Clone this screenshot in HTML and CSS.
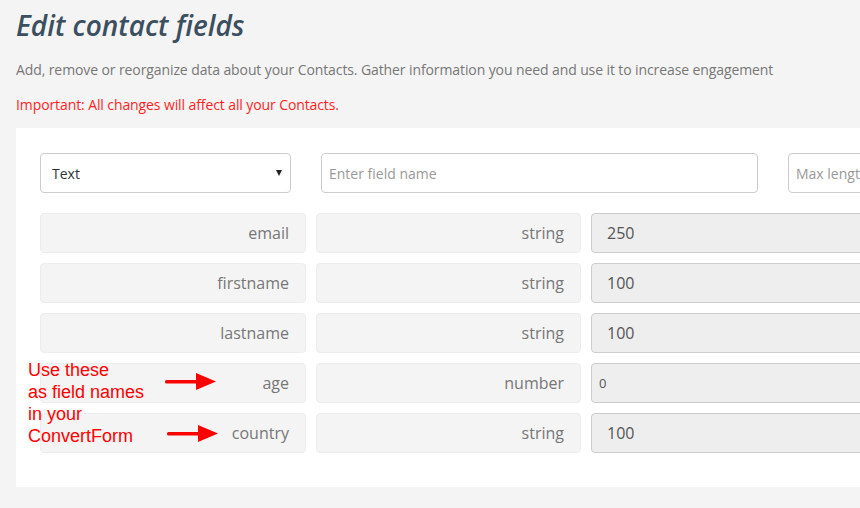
FILE: index.html
```html
<!DOCTYPE html>
<html lang="en">
<head>
    <meta charset="UTF-8">
    <meta name="viewport" content="width=device-width, initial-scale=1.0">
    <title>Edit contact fields</title>
    <link rel="stylesheet" href="styles.css">
</head>
<body>
    <h1 class="page-title">Edit contact fields</h1>
    <p class="page-intro">Add, remove or reorganize data about your Contacts. Gather information you need and use it to increase engagement</p>
    <p class="page-warning">Important: All changes will affect all your Contacts.</p>

    <div class="fields-panel">
        <!-- New field -->
        <div class="new-field">
            <div class="select-wrap">
                <select class="field-type">
                    <option>Text</option>
                    <option>Number</option>
                </select>
            </div>
            <input type="text" class="field-name" placeholder="Enter field name">
            <input type="text" class="field-max" placeholder="Max length">
        </div>

        <!-- Existing fields -->
        <div class="field-list">
            <div class="field-row">
                <div class="cell-readonly">email</div>
                <div class="cell-readonly">string</div>
                <div class="cell-value">250</div>
            </div>
            <div class="field-row">
                <div class="cell-readonly">firstname</div>
                <div class="cell-readonly">string</div>
                <div class="cell-value">100</div>
            </div>
            <div class="field-row">
                <div class="cell-readonly">lastname</div>
                <div class="cell-readonly">string</div>
                <div class="cell-value">100</div>
            </div>
            <div class="field-row">
                <div class="cell-readonly">age</div>
                <div class="cell-readonly">number</div>
                <div class="cell-value small">0</div>
            </div>
            <div class="field-row">
                <div class="cell-readonly">country</div>
                <div class="cell-readonly">string</div>
                <div class="cell-value">100</div>
            </div>
        </div>

        <!-- Annotation -->
        <div class="note">Use these<br>as field names<br>in your<br>ConvertForm</div>
        <svg class="arrow arrow-age" width="52" height="18" viewBox="0 0 52 18">
            <rect x="0" y="7" width="33" height="3.5" rx="1.5" fill="#ff0000"/>
            <polygon points="31,0 51,8.5 31,17" fill="#ff0000"/>
        </svg>
        <svg class="arrow arrow-country" width="52" height="18" viewBox="0 0 52 18">
            <rect x="0" y="7" width="33" height="3.5" rx="1.5" fill="#ff0000"/>
            <polygon points="31,0 51,8.5 31,17" fill="#ff0000"/>
        </svg>
    </div>
</body>
</html>
```

FILE: styles.css
```css
/* General Reset */
* {
    margin: 0;
    padding: 0;
    box-sizing: border-box;
}

html {
    overflow: hidden;
}

body {
    background-color: #f4f4f4;
    font-family: 'Open Sans', sans-serif;
    padding: 0 16px;
    width: 1300px;
}

/* Header */
.page-title {
    margin-top: 5px;
    font-size: 28px;
    line-height: 40px;
    font-style: italic;
    font-weight: 600;
    color: #3b4f5f;
}

.page-intro {
    margin-top: 15px;
    font-size: 14px;
    line-height: 20px;
    letter-spacing: -0.1px;
    color: #777;
}

.page-warning {
    margin-top: 15px;
    font-size: 14px;
    line-height: 20px;
    letter-spacing: -0.1px;
    color: #ff1f1f;
}

/* Panel */
.fields-panel {
    position: relative;
    margin-top: 13px;
    background-color: #fff;
    padding: 25px 0 34px 24px;
}

.new-field {
    display: flex;
    gap: 30px;
    margin-bottom: 20px;
}

.select-wrap {
    position: relative;
    width: 251px;
}

.select-wrap::after {
    content: "";
    position: absolute;
    right: 9px;
    top: 17px;
    border-left: 3px solid transparent;
    border-right: 3px solid transparent;
    border-top: 6px solid #222;
}

.field-type,
.field-name,
.field-max {
    height: 40px;
    border: 1px solid #ccc;
    border-radius: 4px;
    background-color: #fff;
    font-family: 'Open Sans', sans-serif;
    font-size: 14px;
    outline: none;
}

.field-type {
    width: 100%;
    appearance: none;
    -webkit-appearance: none;
    padding: 0 11px;
    color: #333;
}

.field-name {
    width: 437px;
    padding: 0 7px;
}

.field-max {
    width: 300px;
    padding: 0 7px;
}

.field-name::placeholder,
.field-max::placeholder {
    color: #999;
}

/* Field rows */
.field-list {
    display: flex;
    flex-direction: column;
    gap: 10px;
}

.field-row {
    display: grid;
    grid-template-columns: 266px 265px 400px;
    gap: 10px;
}

.cell-readonly,
.cell-value {
    height: 40px;
    border-radius: 4px;
    font-size: 16px;
    display: flex;
    align-items: center;
}

.cell-readonly {
    background-color: #f4f4f4;
    border: 1px solid #ececec;
    justify-content: flex-end;
    padding-right: 16px;
    color: #777;
}

.cell-value {
    background-color: #eee;
    border: 1px solid #ccc;
    padding-left: 15px;
    color: #555;
}

.cell-value.small {
    font-size: 13px;
    padding-left: 7px;
}

/* Annotation over the rows */
.note {
    position: absolute;
    left: 12px;
    top: 231px;
    font-family: 'Liberation Sans', Arial, sans-serif;
    font-size: 18px;
    line-height: 22px;
    color: #ff0000;
}

.arrow {
    position: absolute;
}

.arrow-age {
    left: 149px;
    top: 245px;
}

.arrow-country {
    left: 151px;
    top: 297px;
}
```
